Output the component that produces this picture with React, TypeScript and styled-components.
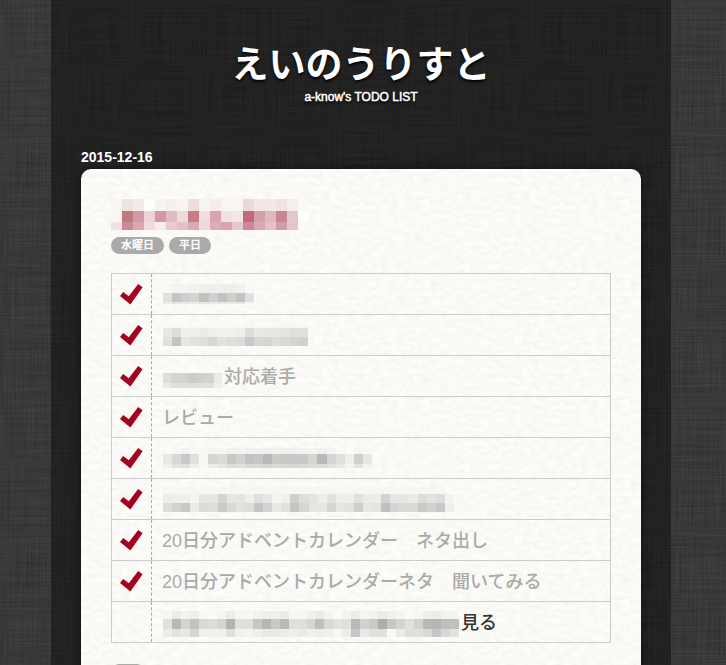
import React from "react";
import styled, { createGlobalStyle } from "styled-components";

const svgUrl = (body: string, size: number) =>
  `url("data:image/svg+xml,${encodeURIComponent(
    `<svg xmlns="http://www.w3.org/2000/svg" width="${size}" height="${size}">${body}</svg>`
  )}")`;

const grey = (channel: string, slope: number, intercept: number) =>
  `<feColorMatrix values="${channel} ${channel} ${channel} 0 0 0 0 1"/>` +
  `<feComponentTransfer><feFuncR type="linear" slope="${slope}" intercept="${intercept}"/>` +
  `<feFuncG type="linear" slope="${slope}" intercept="${intercept}"/>` +
  `<feFuncB type="linear" slope="${slope}" intercept="${intercept}"/></feComponentTransfer>`;

const thread = (frequency: string, seed: number, opacity: number) =>
  `<filter id="f${seed}" x="0" y="0" width="100%" height="100%" color-interpolation-filters="sRGB">` +
  `<feTurbulence type="fractalNoise" baseFrequency="${frequency}" numOctaves="2" seed="${seed}" stitchTiles="stitch"/>` +
  grey("1 0 0 0 0", 0.14, 0.155) +
  `</filter><rect width="100%" height="100%" filter="url(#f${seed})" opacity="${opacity}"/>`;

const linen = svgUrl(thread("0.015 0.6", 3, 1) + thread("0.6 0.015", 8, 0.5), 400);

const paper = svgUrl(
  `<filter id="p" x="0" y="0" width="100%" height="100%" color-interpolation-filters="sRGB">` +
    `<feTurbulence type="fractalNoise" baseFrequency="0.12 0.22" numOctaves="3" seed="5" stitchTiles="stitch"/>` +
    `<feColorMatrix values="0.06 0 0 0 0.95 0.06 0 0 0 0.948 0.06 0 0 0 0.934 0 0 0 0 1"/>` +
    `</filter><rect width="100%" height="100%" filter="url(#p)"/>`,
  200
);

const GlobalStyle = createGlobalStyle`
  * { box-sizing: border-box; }
  body {
    margin: 0;
    background: #393939 ${linen};
    color: #333;
    font-family: "Liberation Sans", "Noto Sans CJK JP", sans-serif;
  }
`;

const Page = styled.main`
  max-width: 620px;
  min-height: 100vh;
  margin: 0 auto;
  padding: 0 30px;
  background: rgba(0, 0, 0, 0.4);
`;

const Viewport = styled.div`
  padding-right: 4px;
  height: 100vh;
  overflow: hidden;
`;

const Header = styled.header`
  padding-top: 42px;
  color: #fff;
  text-align: center;
  text-shadow: 0 2px 3px #000;
`;

const SiteTitle = styled.h1`
  margin: 0;
  font-size: 37px;
  line-height: 48px;
`;

const Subtitle = styled.p`
  margin: 0;
  font-size: 12px;
  -webkit-text-stroke: 0.5px currentColor;
  line-height: 14px;
`;

const DateLabel = styled.time`
  display: block;
  margin-top: 44px;
  color: #fff;
  font-size: 14px;
  font-weight: bold;
  line-height: 18px;
`;

const Card = styled.article`
  margin-top: 3px;
  min-height: 520px;
  padding: 30px;
  border-radius: 10px 10px 0 0;
  background: #fbfaf6 ${paper};
  box-shadow: 0 0 10px rgba(0, 0, 0, 0.5);
`;

const CardTitle = styled.h2`
  display: flex;
  margin: 0;
`;

const Tags = styled.div`
  display: flex;
  gap: 5px;
  margin: 7px 0 19px;

  table + & { margin-top: 21px; }
`;

const Tag = styled.span`
  min-width: 34px;
  height: 17px;
  padding: 0 10px;
  border-radius: 9px;
  background: #aaa;
  color: #fff;
  font-size: 11px;
  font-weight: bold;
  line-height: 16px;
`;

const TodoTable = styled.table`
  width: 100%;
  border-collapse: collapse;
  border: 1px solid #ccc;
`;

const Row = styled.tr`
  height: 41px;
  border-bottom: 1px solid #ccc;
`;

const CheckCell = styled.td`
  width: 40px;
  padding: 0;
  border-right: 1px dashed #aaa;
`;

const CheckLabel = styled.label`
  display: grid;
  place-items: center;
  height: 40px;
  padding-right: 2px;
  cursor: pointer;

  & > * { grid-area: 1 / 1; }
`;

const Checkbox = styled.input`
  appearance: none;
  width: 24px;
  height: 24px;
  margin: 0;

  & + svg { visibility: hidden; }
  &:checked + svg { visibility: visible; }
`;

const TextCell = styled.td`
  padding: 0 10px;
`;

const Task = styled.div<{ $done: boolean }>`
  display: flex;
  align-items: center;
  height: 40px;
  color: ${(p) => (p.$done ? "#aaa" : "#333")};
  font-size: 18px;
  font-weight: 500;
  line-height: 24px;
`;

const TaskText = styled.span`
  padding-top: 2px;
`;

const MosaicArt = styled.svg`
  display: block;
  flex: none;

  ${Task} > & { margin: 0 2px 0 1px; }
`;

type Band = [height: number, cells: string];

function Mosaic({ width, bands }: { width: number; bands: Band[] }) {
  const total = bands.reduce((sum, [h]) => sum + h, 0);
  const columns = Math.max(...bands.map(([, c]) => c.split(" ").length));
  let y = 0;
  return (
    <MosaicArt
      width={width}
      height={total}
      viewBox={`0 0 ${columns} ${total}`}
      preserveAspectRatio="none"
      shapeRendering="crispEdges"
      aria-hidden="true"
    >
      {bands.map(([h, cells], row) => {
        const top = y;
        y += h;
        return cells.split(" ").map((c, x) =>
          c === "-" ? null : (
            <rect
              key={`${row}-${x}`}
              x={x}
              y={top}
              width={1}
              height={h}
              fill={c.length === 2 ? `#${c}${c}${c}` : `#${c}`}
            />
          )
        );
      })}
    </MosaicArt>
  );
}

const titleBands: Band[] = [
  [12, "f8f6f2 eee2e2 f1ebeb fdfefa f8f3f0 f6f0ed f8f4f1 eedde0 f5f4f1 f6eceb f9f5f1 f9f5f1 ecd7d9 f4e7e6 f3e8e6 efe2e1 f5eeeb f9faf6"],
  [11, "f8f5f2 c27880 d09aa6 edd5d7 d498a2 e0bbc3 eedbd9 c77d86 eedee2 d9a3ad eee0e3 f1e6e4 bf6a79 d49eab dfb9bb c98591 e3c6d0 fdfffb"],
  [8, "f2dfe1 cd8a94 dba6b1 efdade f9ecec e8cad1 e5c1c5 dba9b4 eed9dd ddacb6 d9a4ae e6c7cd cc8894 d9a8b3 e3c2c2 d29ea9 e3c5cf -"],
];

interface Todo {
  done: boolean;
  text?: string;
  mosaic?: { width: number; bands: Band[] };
}

const todos: Todo[] = [
  {
    done: true,
    mosaic: {
      width: 91,
      bands: [
        [9, "f8f8f4 f3f3ef f3f3ef f1f1ed efefeb efefeb eeeeea eeeeea f0f0ec f8f8f4"],
        [9, "e0e0dc c5 d0 d5d4d1 c2 d0 c2 cfcfcc c3 e0"],
        [2, "ec e6 e8 e9 e7 e8 e6 e8 e6 f2"],
      ],
    },
  },
  {
    done: true,
    mosaic: {
      width: 145,
      bands: [
        [3, "f9f9f5 f6f6f2 f9f9f5 f8f8f4 f7f7f3 f9f9f5 f9f9f5 f8f8f4 f8f8f4 f5f5f1 f8f8f4 f8f8f4 f7f7f3 f6f6f2 f5f5f1 f5f5f1"],
        [9, "e8e9e5 dd f0f0ec eeeeea ebebe7 eeeeea f2f3ef f0f1ed eeefeb dd e9eae6 e6e7e3 e6e7e3 e3e4e0 dfe0dc e0"],
        [9, "e0e1dd c4 e5e5e1 e1e1dd dfdfdb d7 e2e2de dededa dcdcda c9c9cb d8d8d6 d4d4d2 dcdcda d8d8d5 d4d4d2 d0d0ce"],
      ],
    },
  },
  {
    done: true,
    text: "対応着手",
    mosaic: {
      width: 59,
      bands: [
        [8, "f9f9f5 fafaf7 fafaf7 fcfcf9 fafaf7 fafaf7 -"],
        [10, "deded9 d3d3d1 d3d3d1 cccdca cfd0cd d3d3d1 eaeae7"],
        [5, "e9e9e5 dededb dededb dedfdc dee0dd e0e0dd f0f0ed"],
      ],
    },
  },
  { done: true, text: "レビュー" },
  {
    done: true,
    mosaic: {
      width: 209,
      bands: [
        [6, "fafaf7 f7f7f3 f4f4f0 f8f8f5 f8f8f5 f4f4f1 f5f5f1 f2f2ee f3f3ef f1f1ed f1f1ed f0f0ec f1f1ed f1f1ed f1f1ed f2f2ee f2f2ee efefeb f5f5f1 f8f8f5 fafaf7 f4f4f1 f8f8f5"],
        [10, "e8e8e6 d8d8d6 c8 dfe1e1 f8f8f5 d6d6d3 dadbd7 c8 d2d3d0 c2 c6c7c4 b9 cbccca c7 c8 c9 d4d6d4 b9 d4d6d4 dfdfdc efefeb cfcfcc e6"],
        [4, "f0f0ed e2e2df dfdfdc eeefee f8f8f5 eaeae7 e5e5e1 dcdcda e0e0dc d8 d8 d4 dadad7 d6 d6 d8 dcdcda dc e2e2df e8e8e5 f4f4f1 e4e4e1 f2f2ef"],
      ],
    },
  },
  {
    done: true,
    mosaic: {
      width: 291,
      bands: [
        [7, Array(31).fill("f6f6f2").join(" ")],
        [9, "edeeea efefeb efefeb f5f5f2 e6e6e3 e5e5e2 d5d6d3 e6e6e2 e4e5e1 edeeea dfe0dc e6e6e3 f3f3f0 efefec cf dfdfdc e4e4e1 eeefea e2e2de eeeeea eeeeea e1e2de ebebe8 ececea d2 e5e6e3 e6e6e3 eaebe7 dcddda e2e3df dcdddb f3f3f0"],
        [9, "dcdcd8 d2d2cf c8 e9 dcdcd9 dddddb c9 d8d8d5 e1e1dd dddeda c4 d2 e9e9e6 e0e0dd c8c4c2 d6d6d3 e5e5e2 e5e5e1 d6d6d2 e5e6e4 e1e2de cd e6e7e5 e7e3df c0bfc0 d4d4d2 dadbd8 d8d8d5 c8cac6 d0d2ce c8 efefed"],
      ],
    },
  },
  { done: true, text: "20日分アドベントカレンダー　ネタ出し" },
  { done: true, text: "20日分アドベントカレンダーネタ　聞いてみる" },
  {
    done: false,
    text: "見る",
    mosaic: {
      width: 296,
      bands: [
        [4, "-"],
        [8, "f6f6f2 ebebe8 f2f2ee eeefea f8f8f5 fafaf7 f4f4f1 ecece9 f6f6f3 f8f8f5 f2f2ee eeeeea f0f0ec ebebe7 f6f6f3 f6f6f3 f0f0ec eaeae7 f4f4f1 fafaf7 f4f4f1 ececea f6f6f3 f2f2ef ebebe7 f0f0ed f4f4f1 fafaf7 f6f6f3 eeeeeb ebebe7 f2f2ef f4f4f1"],
        [10, "e0e1dc b8 d4d5d1 c2c4c0 d8d9d6 dcdcda d4d4d0 b2b3b0 e0e0de e0e1de c6 b6b6b4 c9cac6 b8bab6 dfe1dd dddfdb d6d7d4 bebfbc d7d8d4 e1e2df dfe0de b8 d1d2d3 ccc8c4 adaeab c7 d2d4d1 e0e1dd d1d1cf b9bab6 b6b5b8 bebebc c0c0bd"],
        [8, "ececea e2e2e1 e8e8e4 d4d6d0 f0f0ed f1f1ee efefec dfdfde f0f0ee f4f4f1 eeeeeb e8e8e6 e8e8e4 ecece8 eeefeb eaeae7 f0f0ed eeeeeb f0f0ed f6f6f3 ececea c6 e8e8e5 e0e1de e0 f8f8f5 eaeae6 dedfdb e0e0dd d9dad6 c6c7c5 d8d9d6 e2e2df"],
      ],
    },
  },
];

const CheckMark = () => (
  <svg width="24" height="22" viewBox="0 0 24 22" aria-hidden="true">
    <path d="M1 13 L4.2 9 L9.8 13.2 L19.2 1 L23.6 4.2 L11.4 21.4 Z" fill="#a20320" />
  </svg>
);

function TodoRow({ todo, id }: { todo: Todo; id: string }) {
  return (
    <Row>
      <CheckCell>
        <CheckLabel>
          <Checkbox type="checkbox" defaultChecked={todo.done} aria-labelledby={id} />
          <CheckMark />
        </CheckLabel>
      </CheckCell>
      <TextCell>
        <Task id={id} $done={todo.done}>
          {todo.mosaic && <Mosaic {...todo.mosaic} />}
          {todo.text && <TaskText>{todo.text}</TaskText>}
        </Task>
      </TextCell>
    </Row>
  );
}

export default function App() {
  return (
    <Viewport>
      <GlobalStyle />
      <Page>
        <Header>
          <SiteTitle>えいのうりすと</SiteTitle>
          <Subtitle>a-know's TODO LIST</Subtitle>
        </Header>
        <DateLabel dateTime="2015-12-16">2015-12-16</DateLabel>
        <Card>
          <CardTitle>
            <Mosaic width={198} bands={titleBands} />
          </CardTitle>
          <Tags>
            <Tag>水曜日</Tag>
            <Tag>平日</Tag>
          </Tags>
          <TodoTable>
            <tbody>
              {todos.map((todo, i) => (
                <TodoRow key={i} id={`task-${i}`} todo={todo} />
              ))}
            </tbody>
          </TodoTable>
          <Tags>
            <Tag />
          </Tags>
        </Card>
      </Page>
    </Viewport>
  );
}
